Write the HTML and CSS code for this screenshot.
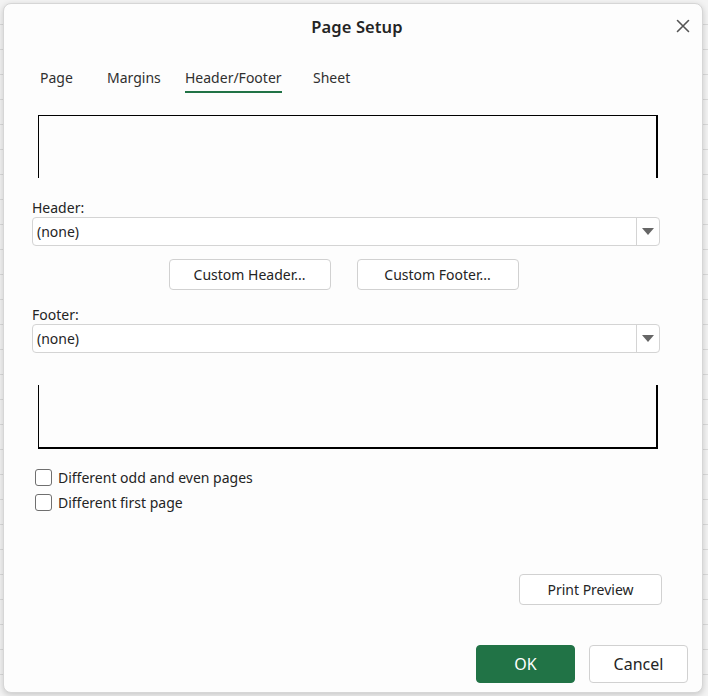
FILE: index.html
```html
<!DOCTYPE html>
<html lang="en">
<head>
<meta charset="utf-8">
<title>Page Setup</title>
<link rel="stylesheet" href="styles.css">
</head>
<body>
<div class="screen">
  <div class="dialog">
    <div class="titlebar">
      <span></span>
      <h1 class="title">Page Setup</h1>
      <button class="close" aria-label="Close">
        <svg width="14" height="14" viewBox="0 0 14 14"><path d="M1.5 1.5 L12.5 12.5 M12.5 1.5 L1.5 12.5" stroke="#555" stroke-width="1.6" fill="none" stroke-linecap="round"/></svg>
      </button>
    </div>
    <div class="tabs">
      <span class="tab">Page</span>
      <span class="tab">Margins</span>
      <span class="tab"><span class="tab-active">Header/Footer</span></span>
      <span class="tab">Sheet</span>
    </div>
    <div class="body">
      <div class="preview preview-top"></div>
      <div class="field-label">Header:</div>
      <div class="select">
        <span class="select-value">(none)</span>
        <span class="select-arrow"><svg width="12" height="7" viewBox="0 0 12 7"><path d="M0 0 H12 L6 7 Z" fill="#666"/></svg></span>
      </div>
      <div class="custom-row">
        <button class="btn btn-custom">Custom Header...</button>
        <button class="btn btn-custom">Custom Footer...</button>
      </div>
      <div class="field-label field-label-footer">Footer:</div>
      <div class="select">
        <span class="select-value">(none)</span>
        <span class="select-arrow"><svg width="12" height="7" viewBox="0 0 12 7"><path d="M0 0 H12 L6 7 Z" fill="#666"/></svg></span>
      </div>
      <div class="preview preview-bottom"></div>
      <div class="checks">
        <label class="check"><span class="box"></span>Different odd and even pages</label>
        <label class="check"><span class="box"></span>Different first page</label>
      </div>
      <button class="btn btn-preview">Print Preview</button>
    </div>
    <div class="actions">
      <button class="btn btn-ok">OK</button>
      <button class="btn btn-cancel">Cancel</button>
    </div>
  </div>
</div>
</body>
</html>
```

FILE: styles.css
```css
* { box-sizing: border-box; }
html, body { margin: 0; padding: 0; }
body {
  font-family: "Noto Sans", "Open Sans", sans-serif;
  color: #242424;
}
.screen {
  width: 708px;
  height: 696px;
  padding: 3px 5px 0 3px;
  background-color: #f3f3f3;
  background-image: repeating-linear-gradient(to bottom, transparent 0, transparent 24px, #dadada 24px, #dadada 25px);
  overflow: hidden;
}
.dialog {
  width: 700px;
  height: 690px;
  background: #fdfdfd;
  border: 1px solid #d6d6d6;
  border-radius: 8px;
  box-shadow: 0 2px 6px rgba(0,0,0,0.18);
  display: flex;
  flex-direction: column;
}
.titlebar {
  height: 47px;
  display: grid;
  grid-template-columns: 1fr auto 1fr;
  align-items: center;
}
.title {
  margin: 0 0 2px 8px;
  font-size: 16.5px;
  font-weight: 600;
  color: #242424;
  letter-spacing: 0.1px;
}
.close {
  justify-self: end;
  margin-right: 12px;
  margin-bottom: 4px;
  border: 0;
  background: none;
  padding: 0;
  width: 14px;
  height: 14px;
  display: flex;
}
.tabs {
  display: grid;
  grid-template-columns: 67px 78px 128px auto;
  padding: 17px 0 0 36px;
  font-size: 14px;
  line-height: 20px;
  color: #303030;
}
.tab { padding-bottom: 5px; }
.tab-active {
  display: inline-block;
  border-bottom: 2px solid #217346;
  padding-bottom: 3px;
}
.body {
  display: flex;
  flex-direction: column;
  padding: 0 42px 0 28px;
}
.preview {
  margin: 0 2px 0 6px;
  border-color: #000;
  border-style: solid;
}
.preview-top {
  margin-top: 17px;
  height: 63px;
  border-width: 1px 2px 0 1px;
}
.preview-bottom {
  margin-top: 32px;
  height: 64px;
  border-width: 0 2px 2px 1px;
}
.field-label {
  margin-top: 20px;
  font-size: 14px;
  line-height: 19px;
}
.field-label-footer { margin-top: 15px; }
.select {
  height: 29px;
  display: flex;
  background: #fff;
  border: 1px solid #d4d4d4;
  border-radius: 4px;
  font-size: 14px;
}
.select-value {
  flex: 1;
  padding-left: 4px;
  display: flex;
  align-items: center;
}
.select-arrow {
  width: 23px;
  border-left: 1px solid #d4d4d4;
  display: flex;
  align-items: center;
  justify-content: center;
}
.btn {
  font-family: inherit;
  background: #fff;
  border: 1px solid #d1d1d1;
  border-radius: 4px;
  color: #242424;
  padding: 0;
}
.custom-row {
  margin-top: 13px;
  display: flex;
  justify-content: center;
  gap: 26px;
  padding-right: 5px;
}
.btn-custom {
  width: 162px;
  height: 31px;
  font-size: 14px;
}
.checks {
  margin-top: 18px;
  display: flex;
  flex-direction: column;
  gap: 5px;
}
.check {
  display: flex;
  align-items: center;
  height: 20px;
  font-size: 14px;
  padding-left: 3px;
}
.box {
  width: 17px;
  height: 17px;
  border: 1px solid #6f6f6f;
  border-radius: 3px;
  background: #fff;
  margin-right: 6px;
}
.btn-preview {
  align-self: flex-end;
  margin-top: 62px;
  margin-right: -2px;
  width: 143px;
  height: 31px;
  font-size: 14px;
}
.actions {
  margin-top: 40px;
  display: flex;
  justify-content: flex-end;
  gap: 14px;
  padding-right: 14px;
}
.btn-ok, .btn-cancel {
  width: 99px;
  height: 38px;
  font-size: 16px;
}
.btn-ok {
  background: #217346;
  border-color: #217346;
  color: #fff;
}
```
